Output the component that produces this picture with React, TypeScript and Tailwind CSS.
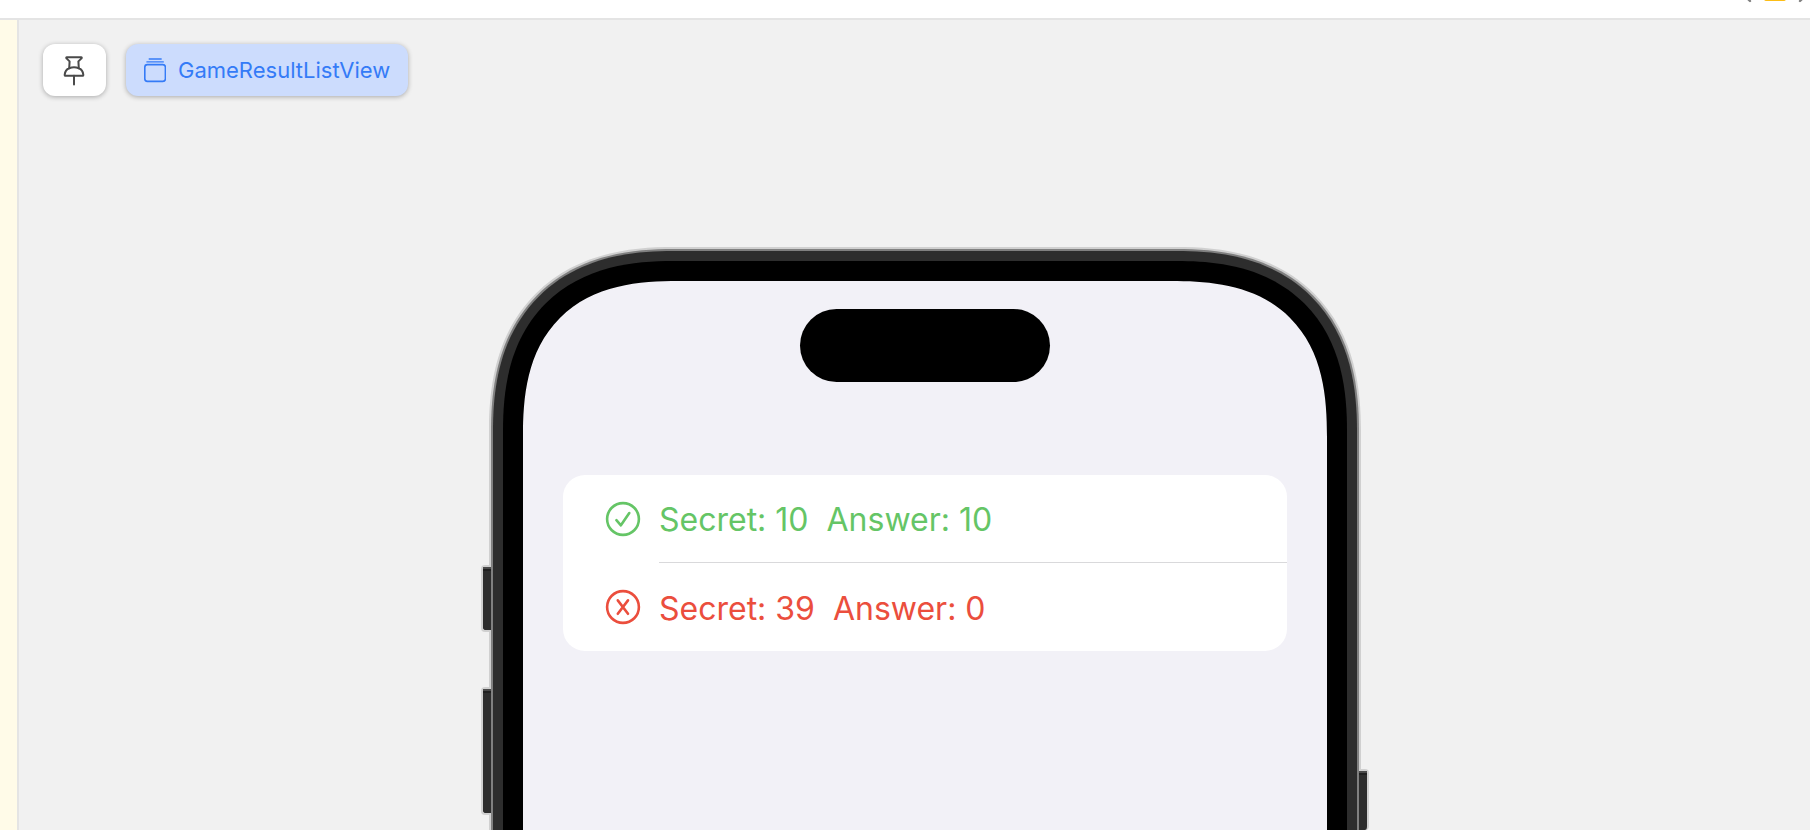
import type { ReactNode } from "react";

type GameResult = { secret: number; answer: number };

const results: GameResult[] = [
  { secret: 10, answer: 10 },
  { secret: 39, answer: 0 },
];

function PinIcon() {
  return (
    <svg className="h-[33px] w-6" viewBox="0 0 24 33" fill="none" stroke="#4a4a4a" strokeWidth="2" strokeLinecap="round" strokeLinejoin="round" aria-hidden="true">
      <path d="M4.9 3.2H19.1C19.8 3.2 20 4 19.5 4.4L16.4 7.4L16.8 14.2C19.4 15.2 21 17.600 21.3 20.600C21.4 21.400 21 21.800 20.400 21.800H3.600C3 21.800 2.600 21.400 2.700 20.600C3 17.600 4.600 15.200 7.200 14.200L7.600 7.400L4.500 4.400C4 4 4.200 3.200 4.900 3.200Z" />
      <path d="M7.2 14.2C10 13.200 14 13.200 16.8 14.200" />
      <path d="M12 21.800V30.600" />
    </svg>
  );
}

function StackIcon() {
  return (
    <svg className="h-[25px] w-[22px]" viewBox="0 0 22 25" fill="none" stroke="currentColor" strokeLinecap="round" aria-hidden="true">
      <rect x="0.8" y="6.6" width="20.6" height="16.8" rx="2.6" strokeWidth="1.6" />
      <path d="M2.9 3.9h16.4" strokeWidth="1.3" />
      <path d="M5.2 1h12" strokeWidth="1.3" />
    </svg>
  );
}

function StatusIcon({ correct }: { correct: boolean }) {
  return (
    <svg className="size-9 shrink-0" viewBox="0 0 36 36" fill="none" stroke="currentColor" strokeWidth="2.6" strokeLinecap="round" strokeLinejoin="round" aria-hidden="true">
      <circle cx="18" cy="18" r="15.9" />
      {correct ? <path d="M11.4 19.2l4.5 5.1 8.4-12.3" /> : <path d="M12.8 11.4l10.2 13.4M23 11.4L12.8 24.8" />}
    </svg>
  );
}

function ResultRow({ result, divided }: { result: GameResult; divided: boolean }) {
  const correct = result.secret === result.answer;
  return (
    <li className={`flex h-[88px] items-center gap-[18px] pl-[42px] ${correct ? "text-[#65c566]" : "text-[#eb4e3d]"}`}>
      <StatusIcon correct={correct} />
      <div className={`flex h-full flex-1 items-center gap-[18px] pt-[3px] text-[32px] whitespace-nowrap ${divided ? "border-b border-[#d9d9db]" : ""}`}>
        <span>Secret: {result.secret}</span>
        <span>Answer: {result.answer}</span>
      </div>
    </li>
  );
}

function SideButton({ className }: { className: string }) {
  return (
    <div className={`absolute z-10 w-2.5 border-2 border-[#d0d0d0] bg-[#2d2d2d] ${className}`}>
      <div className="h-0.5 bg-[#4a4a4a]" />
      <div className="h-0.5 bg-[#202020]" />
    </div>
  );
}

function Phone({ children }: { children: ReactNode }) {
  return (
    <div className="relative mx-auto flex w-[872px] max-w-full">
      <SideButton className="top-[318px] -left-2 h-[67px] rounded-l border-r-0" />
      <SideButton className="top-[440px] -left-2 h-[128px] rounded-l border-r-0" />
      <SideButton className="top-[522px] -right-2 bottom-0 rounded-r border-b-0 border-l-0" />
      <div className="flex flex-1 rounded-t-[184px] bg-[#d0d0d0] px-0.5 pt-0.5 [corner-shape:superellipse(1.245)]">
        <div className="flex flex-1 rounded-t-[182px] bg-[#808080] px-0.5 pt-0.5 [corner-shape:superellipse(1.245)]">
          <div className="flex flex-1 rounded-t-[180px] bg-[#2d2d2d] px-2.5 pt-2.5 [corner-shape:superellipse(1.245)]">
            <div className="flex flex-1 rounded-t-[170px] bg-black px-5 pt-5 [corner-shape:superellipse(1.265)]">
              <div className="flex-1 rounded-t-[156px] bg-[#f2f1f7] px-10 pt-7 [corner-shape:superellipse(1.36)]">{children}</div>
            </div>
          </div>
        </div>
      </div>
    </div>
  );
}

export default function App() {
  return (
    <div className="flex h-screen flex-col overflow-hidden bg-[#f1f1f1] font-[Inter,'Liberation_Sans',sans-serif]">
      <header className="flex h-5 shrink-0 items-end justify-end gap-3 overflow-hidden border-b-2 border-[#e4e4e4] bg-white pr-0.5">
        <button type="button" aria-label="Previous issue" className="mb-[15px]">
          <svg className="h-4 w-2.5" viewBox="0 0 10 16" fill="none" stroke="#808080" strokeWidth="2.4" strokeLinecap="round"><path d="M8 2L2 8l6 6" /></svg>
        </button>
        <svg className="mb-[17px] h-5 w-[22px]" viewBox="0 0 22 20" fill="#fcbd16" aria-hidden="true"><path d="M11 0l11 18q-.2 2-2 2H2q-1.800 0-2-2z" /></svg>
        <button type="button" aria-label="Next issue" className="mb-[15px]">
          <svg className="h-4 w-2.5" viewBox="0 0 10 16" fill="none" stroke="#808080" strokeWidth="2.4" strokeLinecap="round"><path d="M2 2l6 6-6 6" /></svg>
        </button>
      </header>
      <div className="flex min-h-0 flex-1">
        <div className="w-[19px] shrink-0 border-r-2 border-[#e4e4e4] bg-[#fffbe8]" />
        <main className="flex min-w-0 flex-1 flex-col">
          <nav className="flex gap-5 pt-6 pl-6">
            <button type="button" aria-label="Pin preview" className="flex h-[52px] w-[63px] items-center justify-center rounded-xl bg-white pr-px shadow-[0_1px_5px_rgba(0,0,0,0.3)]">
              <PinIcon />
            </button>
            <button type="button" className="flex h-[52px] items-center gap-3 rounded-xl bg-[#ccdcfd] px-[18px] text-[22px] font-normal text-[#347bf7] shadow-[0_1px_5px_rgba(0,0,0,0.3)]">
              <StackIcon />
              GameResultListView
            </button>
          </nav>
          <div className="flex min-h-0 flex-1 pt-[151px] pl-[21px]">
            <Phone>
              <div className="mx-auto h-[73px] w-[250px] rounded-[37px] bg-black" />
              <ul className="mt-[93px] overflow-hidden rounded-[22px] bg-white">
                {results.map((result, index) => (
                  <ResultRow key={index} result={result} divided={index < results.length - 1} />
                ))}
              </ul>
            </Phone>
          </div>
        </main>
      </div>
    </div>
  );
}
